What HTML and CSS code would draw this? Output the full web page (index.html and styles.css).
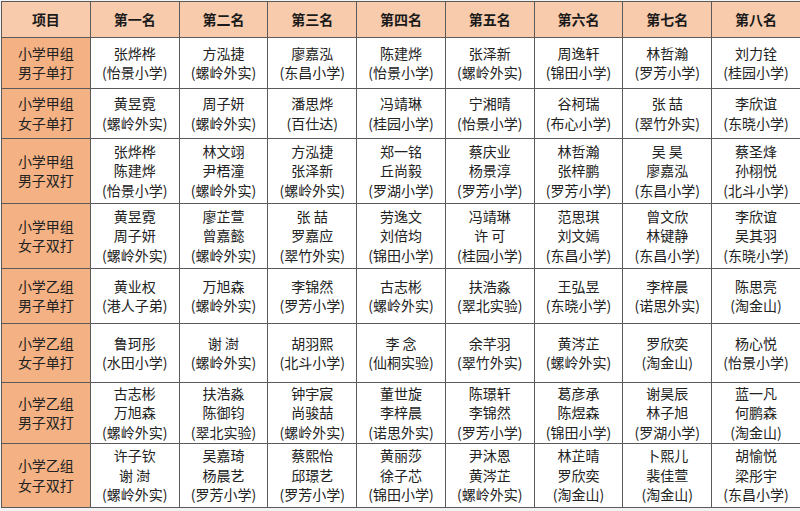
FILE: index.html
```html
<!DOCTYPE html>
<html lang="zh">
<head>
<meta charset="utf-8">
<title>比赛成绩</title>
<link rel="stylesheet" href="styles.css">
</head>
<body>
<div class="sheet">
<table class="rank">
  <thead>
    <tr class="row-head">
      <th>项目</th><th>第一名</th><th>第二名</th><th>第三名</th><th>第四名</th><th>第五名</th><th>第六名</th><th class="dash">第七名</th><th>第八名</th>
    </tr>
  </thead>
  <tbody>
    <tr class="row-a">
      <td class="cat">小学甲组<br>男子单打</td>
      <td>张烨桦<br>(怡景小学)</td>
      <td>方泓捷<br>(螺岭外实)</td>
      <td>廖嘉泓<br>(东昌小学)</td>
      <td>陈建烨<br>(怡景小学)</td>
      <td>张泽新<br>(螺岭外实)</td>
      <td>周逸轩<br>(锦田小学)</td>
      <td class="dash">林哲瀚<br>(罗芳小学)</td>
      <td>刘力铨<br>(桂园小学)</td>
    </tr>
    <tr class="row-b">
      <td class="cat">小学甲组<br>女子单打</td>
      <td>黄昱霓<br>(螺岭外实)</td>
      <td>周子妍<br>(螺岭外实)</td>
      <td>潘思烨<br>(百仕达)</td>
      <td>冯靖琳<br>(桂园小学)</td>
      <td>宁湘晴<br>(怡景小学)</td>
      <td>谷柯瑞<br>(布心小学)</td>
      <td class="dash">张 喆<br>(翠竹外实)</td>
      <td>李欣谊<br>(东晓小学)</td>
    </tr>
    <tr class="row-c">
      <td class="cat">小学甲组<br>男子双打</td>
      <td>张烨桦<br>陈建烨<br>(怡景小学)</td>
      <td>林文翊<br>尹梧潼<br>(螺岭外实)</td>
      <td>方泓捷<br>张泽新<br>(螺岭外实)</td>
      <td>郑一铭<br>丘尚毅<br>(罗湖小学)</td>
      <td>蔡庆业<br>杨景淳<br>(罗芳小学)</td>
      <td>林哲瀚<br>张梓鹏<br>(罗芳小学)</td>
      <td class="dash">吴 昊<br>廖嘉泓<br>(东昌小学)</td>
      <td>蔡圣烽<br>孙栩悦<br>(北斗小学)</td>
    </tr>
    <tr class="row-c">
      <td class="cat">小学甲组<br>女子双打</td>
      <td>黄昱霓<br>周子妍<br>(螺岭外实)</td>
      <td>廖芷萱<br>曾嘉懿<br>(螺岭外实)</td>
      <td>张 喆<br>罗嘉应<br>(翠竹外实)</td>
      <td>劳逸文<br>刘倍均<br>(锦田小学)</td>
      <td>冯靖琳<br>许 可<br>(桂园小学)</td>
      <td>范思琪<br>刘文嫣<br>(东昌小学)</td>
      <td class="dash">曾文欣<br>林键静<br>(东昌小学)</td>
      <td>李欣谊<br>吴其羽<br>(东晓小学)</td>
    </tr>
    <tr class="row-d">
      <td class="cat">小学乙组<br>男子单打</td>
      <td>黄业权<br>(港人子弟)</td>
      <td>万旭森<br>(螺岭外实)</td>
      <td>李锦然<br>(罗芳小学)</td>
      <td>古志彬<br>(螺岭外实)</td>
      <td>扶浩淼<br>(翠北实验)</td>
      <td>王弘昱<br>(东晓小学)</td>
      <td class="dash">李梓晨<br>(诺思外实)</td>
      <td>陈思亮<br>(淘金山)</td>
    </tr>
    <tr class="row-e">
      <td class="cat">小学乙组<br>女子单打</td>
      <td>鲁珂彤<br>(水田小学)</td>
      <td>谢 澍<br>(螺岭外实)</td>
      <td>胡羽熙<br>(北斗小学)</td>
      <td>李 念<br>(仙桐实验)</td>
      <td>余芊羽<br>(翠竹外实)</td>
      <td>黄涔芷<br>(螺岭外实)</td>
      <td class="dash">罗欣奕<br>(淘金山)</td>
      <td>杨心悦<br>(怡景小学)</td>
    </tr>
    <tr class="row-f">
      <td class="cat">小学乙组<br>男子双打</td>
      <td>古志彬<br>万旭森<br>(螺岭外实)</td>
      <td>扶浩淼<br>陈御钧<br>(翠北实验)</td>
      <td>钟宇宸<br>尚骏喆<br>(螺岭外实)</td>
      <td>董世旋<br>李梓晨<br>(诺思外实)</td>
      <td>陈璟轩<br>李锦然<br>(罗芳小学)</td>
      <td>葛彦承<br>陈煜森<br>(锦田小学)</td>
      <td class="dash">谢昊辰<br>林子旭<br>(罗湖小学)</td>
      <td>蓝一凡<br>何鹏森<br>(淘金山)</td>
    </tr>
    <tr class="row-g">
      <td class="cat">小学乙组<br>女子双打</td>
      <td>许子钦<br>谢 澍<br>(螺岭外实)</td>
      <td>吴嘉琦<br>杨晨艺<br>(罗芳小学)</td>
      <td>蔡熙怡<br>邱璟艺<br>(罗芳小学)</td>
      <td>黄丽莎<br>徐子芯<br>(锦田小学)</td>
      <td>尹沐恩<br>黄涔芷<br>(螺岭外实)</td>
      <td>林芷晴<br>罗欣奕<br>(淘金山)</td>
      <td class="dash">卜熙儿<br>裴佳萱<br>(淘金山)</td>
      <td>胡愉悦<br>梁彤宇<br>(东昌小学)</td>
    </tr>
  </tbody>
</table>
</div>
</body>
</html>
```

FILE: styles.css
```css
html, body {
  margin: 0;
  padding: 0;
  background: #ffffff;
}

.sheet {
  width: 800px;
  height: 511px;
  overflow: hidden;
  background: #f2f2f2;
  padding: 1px 0 0 1px;
  box-sizing: border-box;
}

.rank {
  border-collapse: collapse;
  table-layout: fixed;
  width: 800px;
  background: #ffffff;
  font-family: "Noto Sans CJK SC", "Noto Sans", sans-serif;
  font-size: 14px;
  line-height: 19.5px;
  color: #222222;
}

.rank th,
.rank td {
  border: 1px solid #5a5a5a;
  padding: 0;
  text-align: center;
  vertical-align: middle;
  font-weight: normal;
}

.rank th {
  background: #f8cbad;
  font-weight: bold;
  color: #1a1a1a;
}

.rank td.cat {
  background: #f4b183;
}

.rank .dash {
  border-left: 1px dashed #b8b8b8;
}

.row-head { height: 36px; }
.row-a { height: 51px; }
.row-b { height: 50px; }
.row-c { height: 65px; }
.row-d { height: 55px; }
.row-e { height: 59px; }
.row-f { height: 61px; }
.row-g { height: 64px; }
```
